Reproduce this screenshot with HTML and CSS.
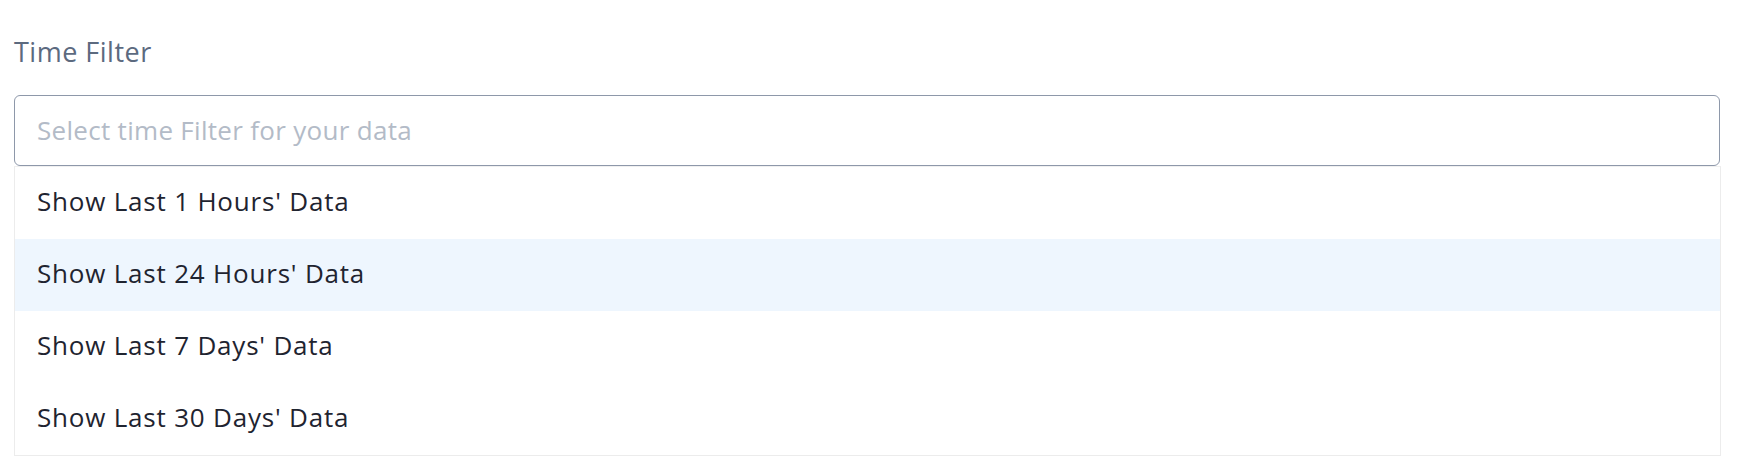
FILE: index.html
```html
<!DOCTYPE html>
<html lang="en">
<head>
<meta charset="utf-8">
<title>Time Filter</title>
<link rel="stylesheet" href="styles.css">
</head>
<body>
  <div class="field">
    <label class="field-label" for="time-filter">Time Filter</label>
    <div class="select">
      <input id="time-filter" class="select-input" type="text" placeholder="Select time Filter for your data">
      <ul class="menu">
        <li class="menu-item">Show Last 1 Hours' Data</li>
        <li class="menu-item is-active">Show Last 24 Hours' Data</li>
        <li class="menu-item">Show Last 7 Days' Data</li>
        <li class="menu-item">Show Last 30 Days' Data</li>
      </ul>
    </div>
  </div>
</body>
</html>
```
FILE: styles.css
```css
* { box-sizing: border-box; }
html, body { margin: 0; padding: 0; background: #ffffff; }
body { font-family: "Open Sans", sans-serif; }

.field {
  padding: 36px 18px 0 14px;
  display: flex;
  flex-direction: column;
}

.field-label {
  font-size: 27px;
  line-height: 32px;
  font-weight: 400;
  letter-spacing: 0.5px;
  color: #5c6a7f;
  margin-bottom: 27px;
}

.select {
  display: flex;
  flex-direction: column;
}

.select-input {
  display: block;
  width: 100%;
  height: 71px;
  margin: 0;
  padding: 0 0 2px 22px;
  border: 1.5px solid #8e98aa;
  border-radius: 6px;
  font-family: inherit;
  font-size: 26px;
  letter-spacing: 0.3px;
  color: #1f2430;
  background: #ffffff;
  outline: none;
}

.select-input::placeholder { color: #b3bbc7; opacity: 1; }

.menu {
  list-style: none;
  margin: 0 -1px 0 0;
  padding: 0;
  border: 1px solid #ececec;
  border-top-color: #f0f0f0;
}

.menu-item {
  height: 72px;
  line-height: 68px;
  padding: 0 0 4px 22px;
  font-size: 26px;
  letter-spacing: 0.8px;
  color: #1f2430;
}

.menu-item.is-active { background: #eef6fe; }
```
